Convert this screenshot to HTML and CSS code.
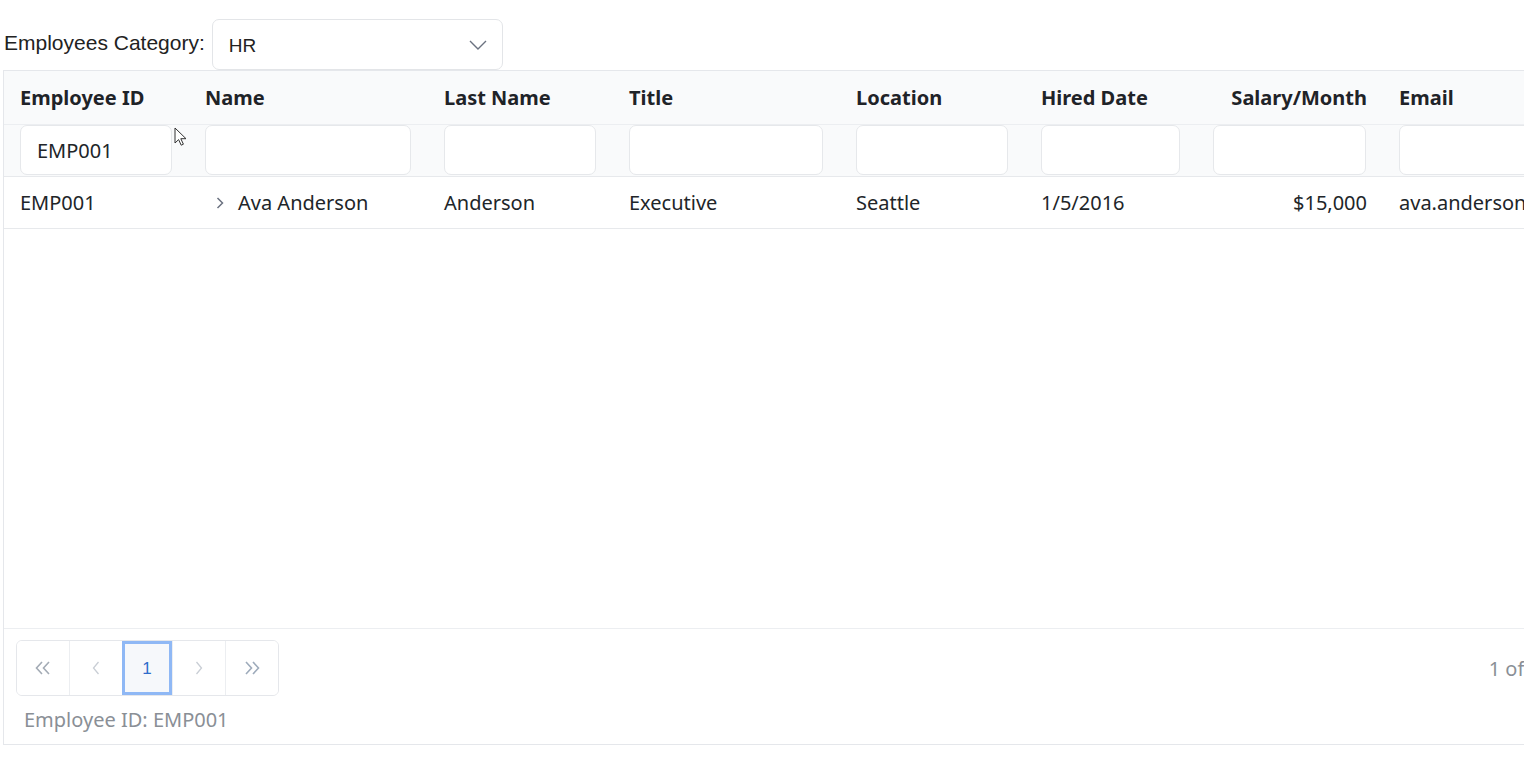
FILE: index.html
```html
<!DOCTYPE html>
<html lang="en">
<head>
    <meta charset="UTF-8">
    <meta name="viewport" content="width=device-width, initial-scale=1.0">
    <title>Employees</title>
    <link rel="stylesheet" href="styles.css">
</head>
<body>
    <div class="toolbar">
        <label class="toolbar-label" for="category">Employees Category:</label>
        <div class="select" id="category">
            <span>HR</span>
            <svg class="select-arrow" width="18" height="10" viewBox="0 0 18 10"><path d="M1 1l8 8 8-8" fill="none" stroke="#6b7280" stroke-width="1.4"/></svg>
        </div>
    </div>

    <div class="grid">
        <table class="grid-table">
            <colgroup>
                <col style="width:185px">
                <col style="width:239px">
                <col style="width:185px">
                <col style="width:227px">
                <col style="width:185px">
                <col style="width:172px">
                <col style="width:186px">
                <col style="width:172px">
            </colgroup>
            <thead>
                <tr class="head-row">
                    <th>Employee ID</th>
                    <th>Name</th>
                    <th>Last Name</th>
                    <th>Title</th>
                    <th>Location</th>
                    <th>Hired Date</th>
                    <th class="num">Salary/Month</th>
                    <th>Email</th>
                </tr>
                <tr class="filter-row">
                    <td><div class="filter">EMP001</div></td>
                    <td><div class="filter"></div></td>
                    <td><div class="filter"></div></td>
                    <td><div class="filter"></div></td>
                    <td><div class="filter"></div></td>
                    <td><div class="filter"></div></td>
                    <td><div class="filter"></div></td>
                    <td><div class="filter"></div></td>
                </tr>
            </thead>
            <tbody>
                <tr class="data-row">
                    <td>EMP001</td>
                    <td class="name-cell"><svg class="expand" width="8" height="12" viewBox="0 0 8 12"><path d="M1.5 1l5 5-5 5" fill="none" stroke="#6b7280" stroke-width="1.5"/></svg>Ava Anderson</td>
                    <td>Anderson</td>
                    <td>Executive</td>
                    <td>Seattle</td>
                    <td>1/5/2016</td>
                    <td class="num">$15,000</td>
                    <td>ava.anderson@example.com</td>
                </tr>
            </tbody>
        </table>
        <div class="grid-empty"></div>
        <div class="grid-footer">
            <div class="pager-line">
                <div class="pager">
                    <button class="page-btn">
                        <svg width="16" height="14" viewBox="0 0 16 14"><path d="M7 1L1.5 7 7 13M14 1L8.5 7 14 13" fill="none" stroke="#a3abb5" stroke-width="1.6"/></svg>
                    </button>
                    <button class="page-btn">
                        <svg width="8" height="14" viewBox="0 0 8 14"><path d="M6.5 1L1.5 7l5 6" fill="none" stroke="#c9ced5" stroke-width="1.3"/></svg>
                    </button>
                    <button class="page-btn active">1</button>
                    <button class="page-btn">
                        <svg width="8" height="14" viewBox="0 0 8 14"><path d="M1.5 1l5 6-5 6" fill="none" stroke="#c9ced5" stroke-width="1.3"/></svg>
                    </button>
                    <button class="page-btn">
                        <svg width="16" height="14" viewBox="0 0 16 14"><path d="M2 1l5.5 6L2 13M9 1l5.5 6L9 13" fill="none" stroke="#9eabbb" stroke-width="1.6"/></svg>
                    </button>
                </div>
                <div class="page-info">1 of 1</div>
            </div>
            <div class="selected-info">Employee ID: EMP001</div>
        </div>
    </div>

    <!-- mouse pointer from the capture -->
    <svg class="cursor" width="14" height="20" viewBox="0 0 14 20"><path d="M1 1v15l3.6-3.4 2.6 5.6 2.2-1-2.6-5.5H12z" fill="#fff" stroke="#333" stroke-width="1"/></svg>
</body>
</html>
```

FILE: styles.css
```css
body{
    margin:0;
    padding:0;
    background:#fff;
    overflow:hidden;
    width:1524px;
    height:769px;
    position:relative;
}
.toolbar{
    display:flex;
    align-items:center;
    padding:19px 0 0 4px;
    height:51px;
}
.toolbar-label{
    font-family:"Liberation Sans",Arial,sans-serif;
    font-size:21px;
    color:#222;
    margin-right:7px;
    margin-top:-4px;
}
.select{
    box-sizing:border-box;
    width:291px;
    height:51px;
    border:1px solid #e3e5e8;
    border-radius:7px;
    display:flex;
    align-items:center;
    justify-content:space-between;
    padding:2px 15px 0 16px;
    font-family:"Liberation Sans",Arial,sans-serif;
    font-size:19px;
    color:#222;
    background:#fff;
    position:relative;
    z-index:2;
}
.select-arrow{
    margin-top:-2px;
}
.grid{
    box-sizing:border-box;
    margin-left:3px;
    width:1555px;
    height:675px;
    border:1px solid #e5e7eb;
    display:flex;
    flex-direction:column;
    font-family:"Noto Sans","Open Sans",sans-serif;
    color:#212529;
}
.grid-table{
    table-layout:fixed;
    border-collapse:collapse;
    width:1551px;
}
.grid-table th,
.grid-table td{
    padding:0 16px;
    text-align:left;
    white-space:nowrap;
    overflow:hidden;
}
.head-row{
    background:#f9fafb;
    height:53px;
    border-bottom:1px solid #eceef1;
}
.head-row th{
    font-size:20px;
    font-weight:700;
    color:#1f2328;
}
.filter-row{
    background:#f9fafb;
    height:52px;
    border-bottom:1px solid #e7e9ec;
}
.filter-row td{
    padding-right:17px;
}
.filter{
    box-sizing:border-box;
    height:50px;
    background:#fff;
    border:1px solid #e6e8eb;
    border-radius:7px;
    font-size:20px;
    line-height:50px;
    padding-left:16px;
    color:#212529;
}
.grid-table th.num,
.grid-table td.num{
    text-align:right;
}
.data-row{
    height:52px;
    border-bottom:1px solid #e7e9ec;
}
.data-row td{
    font-size:20px;
    color:#212529;
}
.name-cell{
    padding-left:27px !important;
}
.expand{
    margin-right:14px;
    position:relative;
    top:-1px;
}
.grid-empty{
    flex:1;
}
.grid-footer{
    border-top:1px solid #eceef1;
    padding:11px 16px 0 12px;
    height:116px;
    box-sizing:border-box;
}
.pager-line{
    display:flex;
    justify-content:space-between;
    align-items:center;
}
.pager{
    display:flex;
    border:1px solid #e5e7eb;
    border-radius:6px;
    height:56px;
    box-sizing:border-box;
    overflow:hidden;
}
.page-btn{
    width:53px;
    height:54px;
    border:0;
    border-left:1px solid #eceef1;
    background:#fff;
    padding:0;
    margin:0;
    display:flex;
    align-items:center;
    justify-content:center;
    box-sizing:border-box;
}
.page-btn:first-child{
    border-left:0;
    width:52px;
}
.page-btn.active{
    width:50px;
    border:3px solid #8fb8f5;
    background:#f6f8fb;
    color:#2f6ccb;
    font-family:"Liberation Sans",Arial,sans-serif;
    font-size:17px;
    padding-top:2px;
}
.page-info{
    font-size:20px;
    color:#8a8f96;
    margin-right:0;
}
.selected-info{
    margin-top:10px;
    margin-left:8px;
    font-size:20px;
    color:#8a8f96;
}
.cursor{
    position:absolute;
    left:174px;
    top:127px;
}
```
